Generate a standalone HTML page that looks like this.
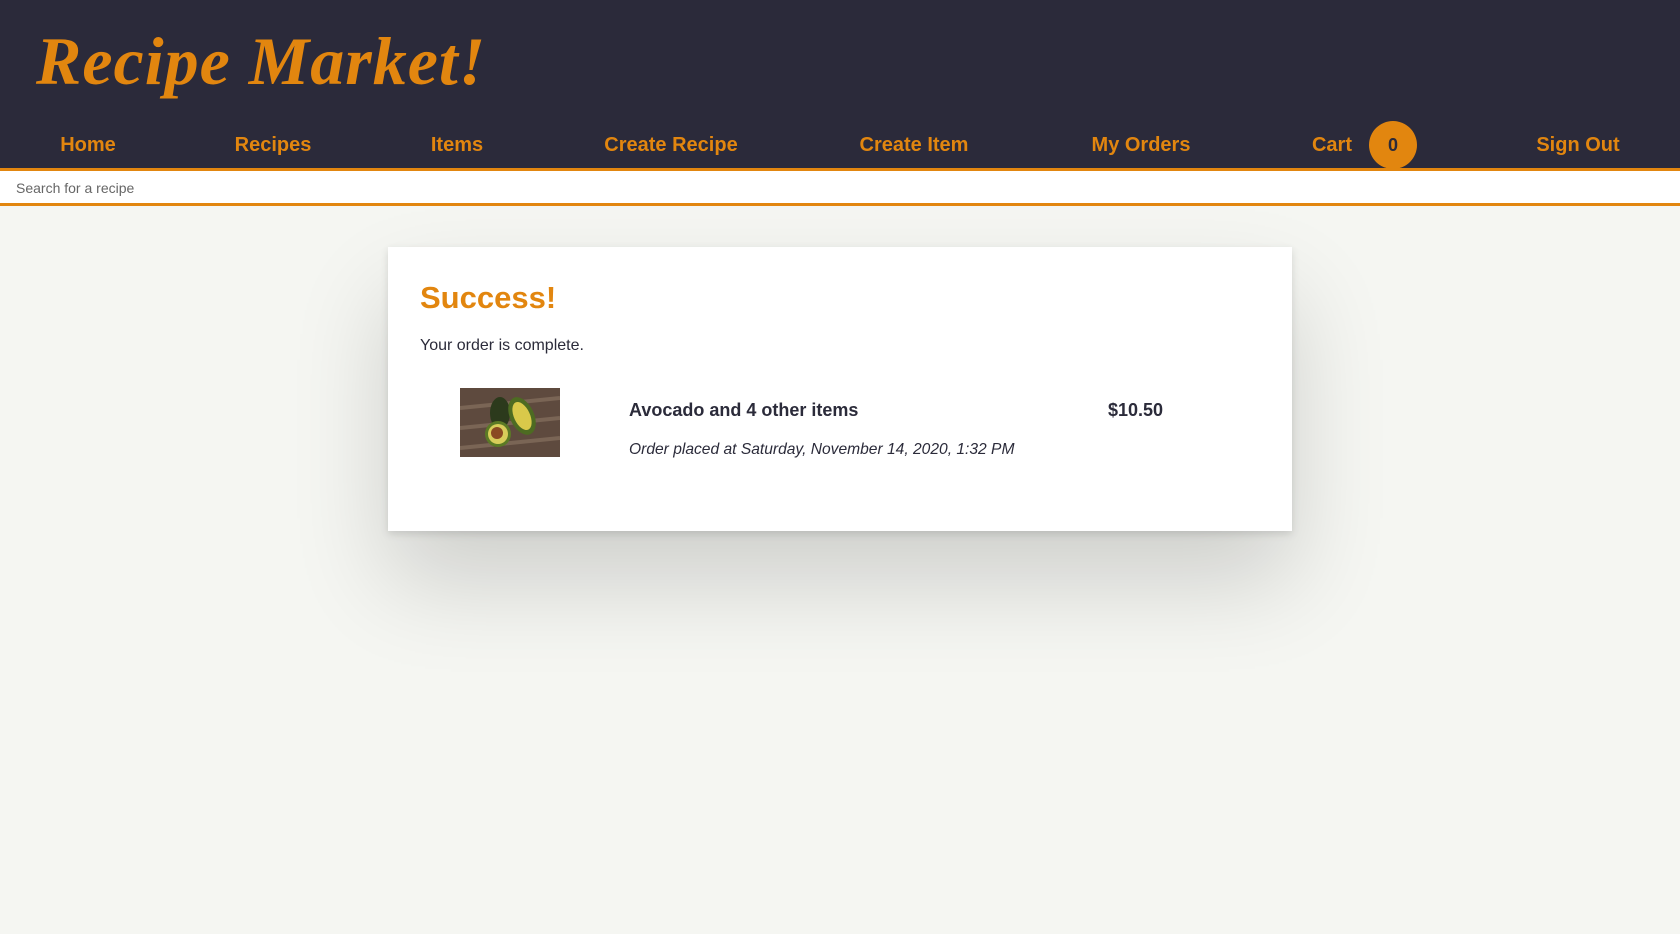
<!DOCTYPE html>
<html><head><meta charset="utf-8"><style>
*{margin:0;padding:0;box-sizing:border-box}
body{width:1680px;height:934px;background:#f5f6f2;font-family:"Liberation Sans",sans-serif;position:relative;overflow:hidden;color:#2b2b3a}
.hdr{position:absolute;left:0;top:0;width:1680px;height:171px;background:#2b2a3a;border-bottom:3px solid #e2860f}
.logo{position:absolute;left:36px;top:22px;font-family:"Liberation Serif",serif;font-style:italic;font-weight:bold;font-size:68px;color:#e2860f;letter-spacing:1px}
.nav{position:absolute;top:134px;font-weight:bold;font-size:20px;color:#e2860f;transform:translateX(-50%);white-space:nowrap}
.badge{position:absolute;left:1369px;top:121px;width:48px;height:48px;border-radius:50%;background:#e2860f;color:#2b2a3a;font-weight:bold;font-size:18px;text-align:center;line-height:48px}
.search{position:absolute;left:0;top:171px;width:1680px;height:35px;background:#fff;border-bottom:3px solid #e2860f;font-size:14px;color:#666;padding:9px 16px}
.card{position:absolute;left:388px;top:247px;width:904px;height:284px;background:#fff;box-shadow:0 50px 90px rgba(0,0,0,.16),0 3px 8px rgba(0,0,0,.12)}
.t{position:absolute;white-space:nowrap}
</style></head><body>
<div class="hdr">
<div class="logo">Recipe Market!</div>
<div class="nav" style="left:88px">Home</div>
<div class="nav" style="left:273px">Recipes</div>
<div class="nav" style="left:457px">Items</div>
<div class="nav" style="left:671px">Create Recipe</div>
<div class="nav" style="left:914px">Create Item</div>
<div class="nav" style="left:1141px">My Orders</div>
<div class="nav" style="left:1332px">Cart</div>
<div class="badge">0</div>
<div class="nav" style="left:1578px">Sign Out</div>
</div>
<div class="search">Search for a recipe</div>
<div class="card">
<div class="t" style="left:32px;top:33px;font-size:31px;font-weight:bold;color:#e2860f">Success!</div>
<div class="t" style="left:32px;top:90px;font-size:16px">Your order is complete.</div>
<svg class="t" style="left:72px;top:141px" width="100" height="69" viewBox="0 0 100 69">
<rect width="100" height="69" fill="#5e4a3e"/>
<path d="M0 20 L100 10 M0 40 L100 30 M0 60 L100 50" stroke="#7a6555" stroke-width="4"/>
<ellipse cx="40" cy="25" rx="10" ry="16" fill="#2c3a1c"/>
<ellipse cx="62" cy="28" rx="12" ry="20" transform="rotate(-25 62 28)" fill="#4d6b22"/>
<ellipse cx="62" cy="28" rx="8" ry="15" transform="rotate(-25 62 28)" fill="#d9c94a"/>
<ellipse cx="38" cy="46" rx="13" ry="13" fill="#5b7a25"/>
<ellipse cx="38" cy="46" rx="10" ry="10" fill="#d8cd5a"/>
<circle cx="37" cy="45" r="6" fill="#8a4a22"/>
</svg>
<div class="t" style="left:241px;top:153px;font-size:18px;font-weight:bold">Avocado and 4 other items</div>
<div class="t" style="left:241px;top:194px;font-size:15.6px;font-style:italic">Order placed at Saturday, November 14, 2020, 1:32 PM</div>
<div class="t" style="left:720px;top:153px;font-size:18px;font-weight:bold">$10.50</div>
</div>
</body></html>
